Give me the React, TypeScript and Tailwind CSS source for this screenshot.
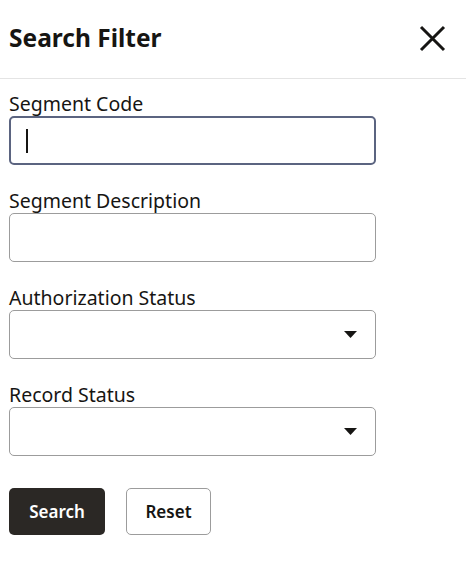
import React from "react";

const font = { fontFamily: '"Noto Sans", "Open Sans", sans-serif' };

function Field({ label, focused, select }: { label: string; focused?: boolean; select?: boolean }) {
  return (
    <div className="flex flex-col">
      <label className="text-[19.5px] leading-6 text-[#161513]">{label}</label>
      <div
        className={
          "h-[49px] w-[367px] rounded-[5px] bg-white flex items-center " +
          (focused ? "border-2 border-[#5b6480] pl-[15px]" : "border border-[#9c9c9c] pl-4")
        }
      >
        {focused && <div className="h-[24px] w-[1.5px] bg-[#161513]" />}
        {select && (
          <svg className="ml-auto mr-[18px]" width="13" height="7" viewBox="0 0 13 7">
            <path d="M0 0 L13 0 L6.5 7 Z" fill="#161513" />
          </svg>
        )}
      </div>
    </div>
  );
}

export default function App() {
  return (
    <div className="w-[466px] h-[587px] bg-white text-[#161513]" style={font}>
      <div className="h-[79px] border-b border-[#e4e4e4] flex items-center justify-between pl-[9px] pr-[20px]">
        <h1 className="text-[24.5px] font-bold mt-[-2px]">Search Filter</h1>
        <svg width="27" height="27" viewBox="0 0 27 27" className="mt-[-2px]">
          <path d="M2 2 L25 25 M25 2 L2 25" stroke="#161513" strokeWidth="3" />
        </svg>
      </div>
      <div className="pl-[9px] pt-[13px] flex flex-col gap-6">
        <Field label="Segment Code" focused />
        <Field label="Segment Description" />
        <Field label="Authorization Status" select />
        <Field label="Record Status" select />
      </div>
      <div className="pl-[9px] mt-[32px] flex gap-[21px]">
        <button className="h-[47px] w-[96px] rounded-[5px] bg-[#2b2825] text-white text-[17px] font-semibold">
          Search
        </button>
        <button className="h-[47px] w-[85px] rounded-[5px] bg-white border border-[#9c9c9c] text-[17px] font-semibold">
          Reset
        </button>
      </div>
    </div>
  );
}
